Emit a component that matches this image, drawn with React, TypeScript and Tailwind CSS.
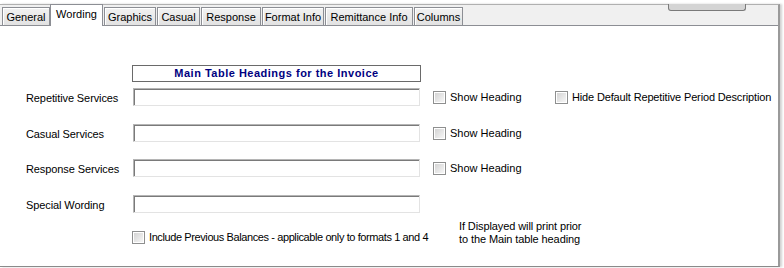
import React from "react";

const tabs: { label: string; w: number; ml: number; sel?: boolean }[] = [
  { label: "General", w: 48, ml: 2 },
  { label: "Wording", w: 53, ml: 0, sel: true },
  { label: "Graphics", w: 52, ml: 1 },
  { label: "Casual", w: 43, ml: 1 },
  { label: "Response", w: 60, ml: 1 },
  { label: "Format Info", w: 62, ml: 1 },
  { label: "Remittance Info", w: 88, ml: 1 },
  { label: "Columns", w: 49, ml: 1 },
];

function Check() {
  return (
    <div className="w-[13px] h-[13px] shrink-0 border border-[#8e8f8f] bg-white p-[1px]">
      <div className="w-full h-full bg-gradient-to-br from-[#d4d4d4] to-[#f6f6f6]" />
    </div>
  );
}

function Input() {
  return (
    <div className="w-[287px] h-[18px] shrink-0 border border-t-[#b5b5b5] border-l-[#b5b5b5] border-r-[#e3e3e3] border-b-[#e3e3e3] bg-white shadow-[inset_1px_1px_0_#7a7a7a]" />
  );
}

function Row({ label, mt, show = true, extra }: { label: string; mt: string; show?: boolean; extra?: boolean }) {
  return (
    <div className={`flex items-center h-[18px] ${mt}`}>
      <div className="w-[107px] shrink-0 pt-[3px] tracking-[-0.1px]">{label}</div>
      <Input />
      {show && (
        <div className="flex items-center ml-[13px] w-[122px] shrink-0">
          <Check />
          <span className="ml-[4px] whitespace-nowrap">Show Heading</span>
        </div>
      )}
      {extra && (
        <div className="flex items-center">
          <Check />
          <span className="ml-[4px] whitespace-nowrap tracking-[-0.15px]">Hide Default Repetitive Period Description</span>
        </div>
      )}
    </div>
  );
}

export default function App() {
  return (
    <div
      className="w-[784px] h-[268px] bg-white relative overflow-hidden text-[11px] leading-[13px] text-black"
      style={{ fontFamily: '"Liberation Sans", Arial, sans-serif' }}
    >
      <div className="mt-[4px] w-[780px] h-[263px] border-t border-r-2 border-b border-t-[#b0b0b0] border-r-[#9a9a9a] border-b-[#8a8a8a] shadow-[2px_0_2px_rgba(0,0,0,0.18)] flex flex-col">
        <div className="h-[21px] bg-[#f0f0f0] border-b border-[#8c8e94] flex items-end shrink-0">
          {tabs.map((t) =>
            t.sel ? (
              <div
                key={t.label}
                className="relative z-10 -mb-px h-[22px] bg-white border border-b-0 border-[#8c8e94] flex justify-center pt-[3px]"
                style={{ width: t.w, marginLeft: t.ml }}
              >
                {t.label}
              </div>
            ) : (
              <div
                key={t.label}
                className="h-[18px] border border-b-0 border-[#8c8e94] bg-gradient-to-b from-[#f2f2f2] to-[#e2e2e2] shadow-[inset_1px_1px_0_#ffffff] flex justify-center pt-[3px]"
                style={{ width: t.w, marginLeft: t.ml }}
              >
                {t.label}
              </div>
            )
          )}
        </div>
        <div className="flex-1 bg-white pl-[26px] flex flex-col">
          <div className="mt-[39px] ml-[106px] w-[289px] h-[17px] border border-[#6a6a6a] flex items-center justify-center font-bold text-[#000080] tracking-[0.5px]">
            Main Table Headings for the Invoice
          </div>
          <Row label="Repetitive Services" mt="mt-[6px]" extra />
          <Row label="Casual Services" mt="mt-[18px]" />
          <Row label="Response Services" mt="mt-[17px]" />
          <Row label="Special Wording" mt="mt-[18px]" show={false} />
          <div className="flex items-start mt-[8px]">
            <div className="w-[106px] shrink-0" />
            <div className="flex items-center mt-[10px] w-[327px] shrink-0">
              <Check />
              <span className="ml-[4px] whitespace-nowrap tracking-[-0.4px]">Include Previous Balances - applicable only to formats 1 and 4</span>
            </div>
            <div className="whitespace-nowrap tracking-[-0.1px] -mt-[1px]">
              If Displayed will print prior
              <br />
              to the Main table heading
            </div>
          </div>
        </div>
      </div>
      <div className="absolute left-[668px] top-[4px] w-[78px] h-[7px] border border-t-0 border-[#7a7a7a] rounded-b-[3px] bg-[#d4d4d4]" />
    </div>
  );
}
